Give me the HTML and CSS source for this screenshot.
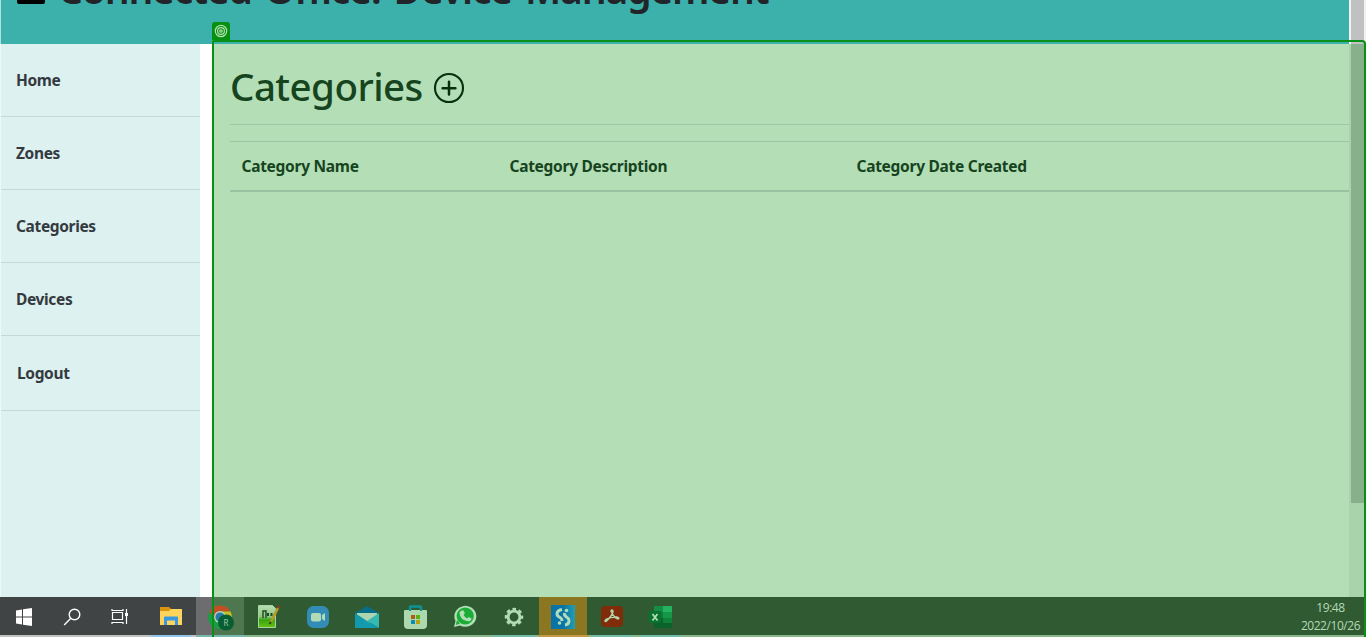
FILE: index.html
```
<!DOCTYPE html>
<html lang="en">
<head>
<meta charset="utf-8">
<title>Connected Office: Device Management</title>
<link rel="stylesheet" href="styles.css">
</head>
<body>
<div class="screen">
  <header class="banner">
    <span class="logo"></span>
    <div class="brand"><span>Connected Office: Device Management</span></div>
    <div class="scroll-top"></div>
  </header>
  <div class="body">
    <nav class="sidebar">
      <a>Home</a><a>Zones</a><a>Categories</a><a>Devices</a><a class="logout">Logout</a>
    </nav>
    <main class="content">
      <div class="page">
        <div class="heading">
          <h1>Categories</h1>
          <svg width="32" height="32" viewBox="0 0 32 32" fill="none" stroke="#04300b" stroke-width="2.1"><circle cx="16" cy="16" r="14"/><path d="M16 9.800v12.800M9.600 16.200h12.800" stroke-linecap="round" stroke-width="2.500"/></svg>
        </div>
        <div class="table-head"><span>Category Name</span><span>Category Description</span><span>Category Date Created</span></div>
      </div>
      <div class="scrollbar"><div class="thumb"></div></div>
    </main>
  </div>
  <footer class="taskbar">
    <div class="slot sys"><svg viewBox="0 0 48 38"><path fill="#fff" d="M16 13.500l6-1v7h-6zM23 12.300l9-1.300v8.500h-9zM16 20.500h6v7l-6-1zM23 20.500h9v8.500l-9-1.300z"/></svg></div>
    <div class="slot sys"><svg viewBox="0 0 48 38" fill="none" stroke="#fff" stroke-width="1.400"><circle cx="26.500" cy="17.500" r="5.300"/><path d="M22.800 21.300l-6.600 6.600"/></svg></div>
    <div class="slot sys view"><svg viewBox="0 0 48 38" fill="none" stroke="#fff" stroke-width="1.200"><path d="M16.500 15.500h10v7h-10zM16 12v1.500h11V12M16 27v-1.500h11V27M30.500 12v15"/><path fill="#fff" stroke="none" d="M29 16h3v3h-3z"/></svg></div>
    <div class="slot run lit"><svg viewBox="0 0 48 38"><path fill="#db940b" d="M13 10h9l2 2v4H13z"/><path fill="#ffd45c" d="M13 14h9l2-2h11v16H13z"/><path fill="#3998df" d="M17 20.500q0-1 1-1h12q1 0 1 1V28h-3v-4.500h-8V28h-3z"/></svg></div>
    <div class="slot chrome"><svg viewBox="0 0 48 38"><circle cx="24" cy="20" r="12" fill="#1b9c45"/><path fill="#c34d26" d="M13.500 14.500a12 12 0 0 1 21 0l-10.500 0-5 8z"/><path fill="#c9bc20" d="M24 14.500h10.500q2.500 5 .5 10l-7 6.500 1-10z"/><circle cx="24" cy="20" r="6" fill="#b2d9b2"/><circle cx="24" cy="20" r="4.600" fill="#2879a9"/><circle cx="30" cy="25.500" r="8" fill="#075e32"/><text x="30" y="28.500" text-anchor="middle" font-size="8" fill="#a2cba5">R</text></svg></div>
    <div class="slot"><svg viewBox="0 0 48 38"><defs><linearGradient id="paper" x2="0" y2="1"><stop stop-color="#b9ddb5"/><stop offset=".5" stop-color="#91c580"/><stop offset=".65" stop-color="#37a414"/><stop offset="1" stop-color="#68c40c"/></linearGradient></defs><path fill="url(#paper)" stroke="#a5d4a5" d="M13.500 8.500h14l3 3v19h-17z"/><path fill="none" stroke="#174b22" stroke-width="1.400" d="M18 21v-7h3v7"/><path fill="#174b22" d="M22 16h2v3h-2zM25.500 16h2v3h-2z"/><path stroke="#b59b22" stroke-width="2.500" d="M33 11l-7 14"/><path stroke="#943c22" stroke-width="2.800" d="M34 9l-1 2"/><path stroke="#263b18" stroke-width="1.500" d="M26 25l-1.500 2"/></svg></div>
    <div class="slot"><svg viewBox="0 0 48 38"><rect x="13" y="9" width="22" height="22" rx="6.500" fill="#328cb5"/><rect x="17" y="16" width="10" height="8.500" rx="2" fill="#b1dbb4"/><path fill="#b1dbb4" d="M28 18l3-2v8l-3-2z"/></svg></div>
    <div class="slot"><svg viewBox="0 0 48 38"><path fill="#086d87" d="M12 16l12-7 12 7v3H12z"/><path fill="#acd6b0" d="M14 16h20v6l-10 6-10-6z"/><path fill="#129aac" d="M12 16l12 8-5 7h-7z"/><path fill="#35b9b0" d="M36 16l-12 8 12 7z"/><path fill="#149bae" d="M12 31l12-7 12 7z"/></svg></div>
    <div class="slot"><svg viewBox="0 0 48 38"><path d="M18 16v-6q0-.6.6-.6h9.800q.6 0 .6.600v6" fill="none" stroke="#0c9198" stroke-width="2.500"/><path fill="#acd8ad" d="M12 14q0-1 1-1h21q1 0 1 1v14q0 4-4 4H16q-4 0-4-4z"/><path d="M18 14v-2m11 2v-2" stroke="#0c9198" stroke-width="2"/><path fill="#b45b1b" d="M19 18h4v4h-4z"/><path fill="#59b114" d="M24 18h4v4h-4z"/><path fill="#0792b5" d="M19 23h4v4h-4z"/><path fill="#b9a00d" d="M24 23h4v4h-4z"/></svg></div>
    <div class="slot"><svg viewBox="0 0 48 38"><path fill="#b2deb5" d="M13 30l1.500-6a11 10.500 0 1 1 4.500 4.500z"/><circle cx="24.200" cy="19" r="8.600" fill="#1bad36"/><path fill="#1bad36" d="M14.800 28l1.200-5 3 3.500z"/><path fill="#b2deb5" d="M20 14q2-1.500 3 .5l.8 1.800-1.200 1.700q1.200 2.400 3.500 3.400l1.700-1.500 2.700 1.600q-.3 3-3.500 2.800-8-1.500-8.500-8 0-1.500 1.500-2.300z"/></svg></div>
    <div class="slot run"><svg viewBox="0 0 48 38"><g fill="none" stroke="#b2dcb4"><circle cx="24" cy="20" r="5.900" stroke-width="2.900"/><circle cx="24" cy="20" r="7.900" stroke-width="2.700" stroke-dasharray="3.500 2.705" stroke-dashoffset="1.750"/></g></svg></div>
    <div class="slot orange"><svg viewBox="0 0 48 38"><defs><linearGradient id="blue"><stop offset=".5" stop-color="#0873a4"/><stop offset="1" stop-color="#239eb3"/></linearGradient></defs><path fill="url(#blue)" d="M12 8h24v24H12z"/><g fill="none" stroke="#b1dcbb" stroke-width="3"><path d="M23 12.500q-5 1-5 4.500 0 2 3 3.500 2 1 2 3.500"/><path d="M26 28q4-.5 4-4.500 0-2-2.500-3.500-2.500-1.500-2-4"/></g><circle cx="27.500" cy="13.500" r="1.800" fill="#b1dcbb"/><circle cx="20.500" cy="26" r="1.800" fill="#b1dcbb"/></svg></div>
    <div class="slot run"><svg viewBox="0 0 48 38"><rect x="13" y="9" width="22" height="21" rx="4" fill="#812c08"/><path fill="none" stroke="#b4d5ac" stroke-width="1.500" d="M23 14q1-2 2 0 0 4-7 10.500-2 0 0-2 5-3 11-2.500 3 1 1 2-4-1-7-8z"/></svg></div>
    <div class="slot run"><svg viewBox="0 0 48 38"><path fill="#168d47" d="M17 9h9v7h-9z"/><path fill="#24b260" d="M26 9h9v6h-9z"/><path fill="#107e3a" d="M17 15h9v7h-9z"/><path fill="#159747" d="M26 15h9v6h-9z"/><path fill="#0b622a" d="M17 21h18v9q0 1-1 1H18q-1 0-1-1z"/><path fill="#10813b" d="M26 21h9v5h-9z"/><rect x="12" y="14" width="12" height="12" rx="1" fill="#07732e"/><path d="M15.500 17l5 6.500m0-6.500l-5 6.500" stroke="#b7ddb9" stroke-width="1.700"/></svg></div>
    <div class="clock"><span>19:48</span><span>2022/10/26</span></div>
  </footer>
  <div class="frame"></div>
  <div class="tag"><svg viewBox="0 0 18 18" fill="none" stroke="#b0e0b0" stroke-width="1.200"><circle cx="9" cy="9" r="5.700"/><circle cx="9" cy="9" r="3.400"/><circle cx="9" cy="9" r="1.200"/></svg></div>
</div>
</body>
</html>
```
FILE: styles.css
```
* { box-sizing: border-box; }
body { margin: 0; overflow: hidden; font-family: "Noto Sans", "Open Sans", sans-serif; }
.screen { position: relative; width: 1366px; height: 637px; display: flex; flex-direction: column; background: #fff; overflow: hidden; }
.banner { height: 44px; flex: none; display: flex; background: #3cb0ab; border-left: 1px solid #b5dfdd; }
.logo { width: 28px; height: 4px; margin-left: 16px; background: #000; border-radius: 0 0 2px 2px; }
.brand { flex: 1; margin-left: 13px; height: 44px; overflow: hidden; font-size: 39px; line-height: 48px; font-weight: 600; letter-spacing: -1.15px; word-spacing: 4px; color: #212529; white-space: nowrap; }
.brand span { display: block; margin-top: -35px; }
.scroll-top { width: 17px; background: #c1c1c1; border-left: 2px solid #f1f1f1; border-right: 2px solid #f1f1f1; }
.body { display: flex; height: 553px; flex: none; }
.sidebar { width: 200px; background: #ddf1f0; border-left: 1px solid #eef8f8; }
.sidebar a { display: flex; align-items: center; height: 73px; padding-left: 15px; border-bottom: 1px solid #c4dad9; font-size: 15.5px; font-weight: 700; letter-spacing: -.35px; color: #343a40; }
.sidebar .logout { height: 75px; padding-left: 16px; }
.content { flex: 1; margin-left: 12px; display: flex; background: #b4deb5; }
.page { flex: 1; padding-left: 18px; }
.heading { display: flex; height: 81px; border-bottom: 1px solid #9fc9a6; }
h1 { width: 203px; margin: 18px 0 0; font-size: 38.5px; line-height: 48px; font-weight: 500; letter-spacing: -.55px; color: #16441f; white-space: nowrap; }
.heading svg { margin-top: 28px; }
.table-head { margin-top: 16px; height: 51px; border-top: 1px solid #9bc6a5; border-bottom: 2px solid #98c2a1; display: grid; grid-template-columns: 268px 347px 1fr; align-items: center; padding-left: 11.5px; font-size: 15.5px; font-weight: 700; letter-spacing: -.28px; color: #16441f; white-space: nowrap; }
.scrollbar { width: 17px; padding-left: 2px; background: #a9d3ab; }
.thumb { width: 13px; height: 459px; background: #88b08a; }
.taskbar { height: 40px; display: flex; border-bottom: 2px solid #8ab68b; background: linear-gradient(90deg, #404444 213px, #305a32 213px); color: #b3d9b5; }
.slot { width: 49px; height: 40px; flex: none; border-bottom: 2px solid #8ab68b; }
.slot svg { display: block; width: 48px; height: 38px; }
.sys { width: 48px; border-bottom-color: #c1c1c1; }
.view { width: 51px; }
.run { border-bottom: 0; background: linear-gradient(#71bda9, #71bda9) 4px 38px / 40px 2px no-repeat, linear-gradient(#8ab68b, #8ab68b) 0 38px / 100% 2px no-repeat; }
.lit { background: linear-gradient(#8fc5ec, #8fc5ec) 4px 38px / 40px 2px no-repeat, linear-gradient(#c1c1c1, #c1c1c1) 0 38px / 100% 2px no-repeat; }
.chrome { background: linear-gradient(90deg, #6d6d6f 17px, #4e764f 17px 48px, transparent 48px); border-bottom-color: #76b9af; }
.orange { background: linear-gradient(90deg, #8b7621 48px, transparent 48px); border-bottom-color: #c69a45; }
.clock { margin-left: auto; width: 71px; padding-top: 2px; display: flex; flex-direction: column; align-items: center; font-family: "Open Sans", sans-serif; font-size: 12px; line-height: 18px; letter-spacing: -.45px; }
.frame { position: absolute; left: 212px; top: 40px; width: 1154px; height: 600px; border: 2px solid #079015; border-radius: 2px 4px 0 0; }
.tag { position: absolute; left: 212px; top: 22px; width: 18px; height: 18px; border-radius: 3px 3px 0 0; background: #06900f; }
.tag svg { display: block; }
```
